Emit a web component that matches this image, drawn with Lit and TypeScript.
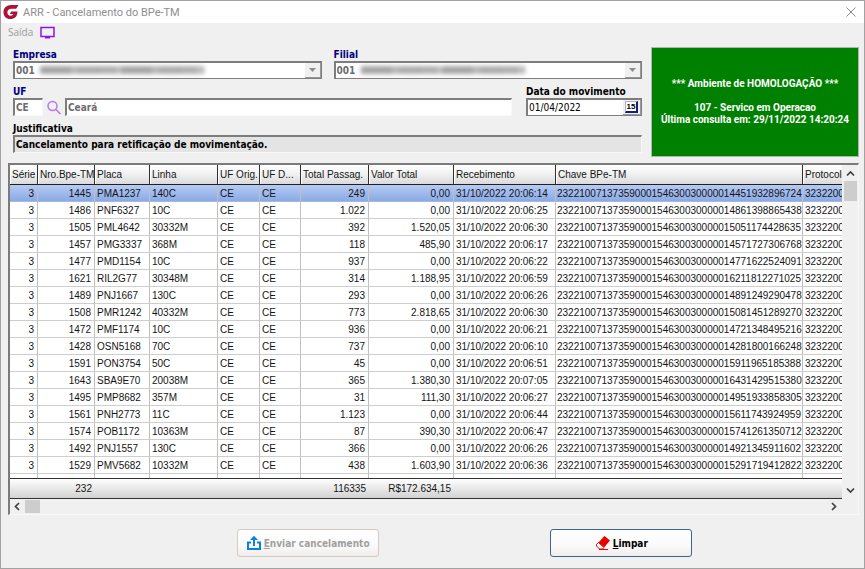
import { LitElement, html, css, svg } from "lit";
import { customElement } from "lit/decorators.js";
import { classMap } from "lit/directives/class-map.js";

const COLUMNS = [
  { key: "serie", label: "Série", num: true },
  { key: "numero", label: "Nro.Bpe-TM", num: true },
  { key: "placa", label: "Placa" },
  { key: "linha", label: "Linha" },
  { key: "origem", label: "UF Orig." },
  { key: "destino", label: "UF D..." },
  { key: "passagens", label: "Total Passag.", num: true },
  { key: "valor", label: "Valor Total", num: true },
  { key: "recebimento", label: "Recebimento" },
  { key: "chave", label: "Chave BPe-TM" },
  { key: "protocolo", label: "Protocolo" },
];

const KEY_PREFIX = "232210071373590001546300300000";

const ROWS: string[][] = [
  ["1445", "PMA1237", "140C", "249", "0,00", "20:06:14", "14451932896724"],
  ["1486", "PNF6327", "10C", "1.022", "0,00", "20:06:25", "14861398865438"],
  ["1505", "PML4642", "30332M", "392", "1.520,05", "20:06:30", "15051174428635"],
  ["1457", "PMG3337", "368M", "118", "485,90", "20:06:17", "14571727306768"],
  ["1477", "PMD1154", "10C", "937", "0,00", "20:06:22", "14771622524091"],
  ["1621", "RIL2G77", "30348M", "314", "1.188,95", "20:06:59", "16211812271025"],
  ["1489", "PNJ1667", "130C", "293", "0,00", "20:06:26", "14891249290478"],
  ["1508", "PMR1242", "40332M", "773", "2.818,65", "20:06:30", "15081451289270"],
  ["1472", "PMF1174", "10C", "936", "0,00", "20:06:21", "14721348495216"],
  ["1428", "OSN5168", "70C", "737", "0,00", "20:06:10", "14281800166248"],
  ["1591", "PON3754", "50C", "45", "0,00", "20:06:51", "15911965185388"],
  ["1643", "SBA9E70", "20038M", "365", "1.380,30", "20:07:05", "16431429515380"],
  ["1495", "PMP8682", "357M", "31", "111,30", "20:06:27", "14951933858305"],
  ["1561", "PNH2773", "11C", "1.123", "0,00", "20:06:44", "15611743924959"],
  ["1574", "POB1172", "10363M", "87", "390,30", "20:06:47", "15741261350712"],
  ["1492", "PNJ1557", "130C", "366", "0,00", "20:06:26", "14921345911602"],
  ["1529", "PMV5682", "10332M", "438", "1.603,90", "20:06:36", "15291719412822"],
].map(([numero, placa, linha, passagens, valor, hora, chave]) => [
  "3", numero, placa, linha, "CE", "CE", passagens, valor,
  `31/10/2022 ${hora}`, KEY_PREFIX + chave, "3232200",
]);

const TOTALS = ["", "232", "", "", "", "", "116335", "R$172.634,15", "", "", ""];

const chevron = (d: string) => html`
  <svg width="9" height="9" viewBox="0 0 9 9" fill="none" stroke="#404040" stroke-width="1.7">
    ${svg`<path d=${d} />`}
  </svg>`;

@customElement("bpe-grid")
export class BpeGrid extends LitElement {
  static styles = css`
    :host {
      display: grid;
      grid-template-columns: minmax(0, 1fr) 16px;
      border: 1px solid #f8f8f8;
      border-top: 2px solid #7b7b7b;
      border-left: 2px solid #7b7b7b;
      background: #f0f0f0;
      font: 10px "Liberation Sans", sans-serif;
      color: #141414;
    }
    .view { overflow: hidden; background: #fff; }
    table { width: 100%; table-layout: fixed; border-collapse: separate; border-spacing: 0; }
    .serie { width: 28px; }
    .numero { width: 57px; }
    .placa { width: 55px; }
    .linha { width: 68px; }
    .origem { width: 42px; }
    .destino { width: 41px; }
    .passagens { width: 68px; }
    .valor { width: 85px; }
    .recebimento { width: 102px; }
    .chave { width: 247px; }
    th, td {
      box-sizing: border-box;
      padding: 0 3px 0 2px;
      overflow: hidden;
      white-space: nowrap;
      text-align: left;
      font-weight: normal;
    }
    th {
      height: 20px;
      background: linear-gradient(#fff, #f0f0f0 50%, #dadada);
      border-right: 1px solid #303030;
      border-bottom: 1px solid #202020;
      box-shadow: inset 1px 1px #fff;
    }
    td {
      height: 17px;
      border-right: 1px solid #c0c0c0;
      border-bottom: 1px solid #cecece;
    }
    td.fit { padding: 0 0 0 1px; }
    th:last-child, td:last-child { border-right: 0; padding-right: 0; }
    td.num { text-align: right; }
    .selected td {
      background: linear-gradient(#b6cbf3, #8aa9e6);
      border-bottom-color: #a6b8dc;
    }
    .filler td { height: 4px; padding: 0; border-bottom: 0; }
    tfoot td {
      height: 21px;
      border-right: 0;
      border-top: 1px solid #303030;
      border-bottom: 1px solid #303030;
      background: linear-gradient(#fff, #e8e8e8 50%, #d2d2d2);
    }
    .vbar, .hbar { display: flex; align-items: center; justify-content: space-between; }
    .vbar { flex-direction: column; padding: 4px 0; }
    .hbar { height: 15px; padding: 0 4px 0 3px; }
    .group { display: flex; align-items: center; gap: 3px; }
    .vbar .group { flex-direction: column; }
    .thumb { background: #cdcdcd; width: 15px; height: 13px; }
    .vbar .thumb { width: 13px; height: 20px; }
    svg { display: block; }
  `;

  render() {
    return html`
      <div class="view">
        <table>
          <thead>
            <tr>${COLUMNS.map((c) => html`<th scope="col" class=${c.key}>${c.label}</th>`)}</tr>
          </thead>
          <tbody>
            ${ROWS.map((row, i) => html`
              <tr class=${classMap({ selected: i === 0 })}>
                ${row.map((v, c) => html`<td class=${classMap({ num: !!COLUMNS[c].num, fit: COLUMNS[c].key === "chave" })}>${v}</td>`)}
              </tr>`)}
            <tr class="filler">${COLUMNS.map(() => html`<td></td>`)}</tr>
          </tbody>
          <tfoot>
            <tr>${TOTALS.map((v) => html`<td class="num">${v}</td>`)}</tr>
          </tfoot>
        </table>
      </div>
      <div class="vbar">
        <div class="group">${chevron("M1 6.5 4.5 3 8 6.5")}<div class="thumb"></div></div>
        ${chevron("M1 2.5 4.5 6 8 2.5")}
      </div>
      <div class="hbar">
        <div class="group">${chevron("M6 1 2.5 4.5 6 8")}<div class="thumb"></div></div>
        ${chevron("M3 1 6.5 4.5 3 8")}
      </div>
      <div></div>
    `;
  }
}

@customElement("app-root")
export class AppRoot extends LitElement {
  static styles = css`
    :host {
      display: block;
      box-sizing: border-box;
      min-height: 100vh;
      border: 1px solid #a2a2a2;
      background: #f0f0f0;
      font: 10px "DejaVu Sans Condensed", "DejaVu Sans", sans-serif;
      color: #000;
    }
    svg { display: block; flex: none; }
    button { font: inherit; color: inherit; padding: 0; cursor: default; }
    .titlebar {
      display: flex;
      align-items: center;
      gap: 4px;
      height: 22px;
      padding: 0 8px 0 2px;
      background: #fff;
      color: #8e8e8e;
      font: 11px Roboto, "Noto Sans", sans-serif;
    }
    .title { flex: 1; margin: 0; font: inherit; }
    .plain { border: 0; background: none; }
    .menu {
      display: flex;
      align-items: center;
      gap: 7px;
      height: 18px;
      padding: 0 7px;
      color: #9a9a9a;
      font: 10px "Open Sans", "Noto Sans", sans-serif;
    }
    .top { display: flex; gap: 9px; padding: 6px 5px 0 12px; }
    .fields { flex: 1; min-width: 0; display: flex; flex-direction: column; gap: 5px; }
    .line { display: flex; gap: 12px; }
    .field { flex: 1; min-width: 0; }
    .date { flex: none; width: 116px; }
    label { display: block; height: 14px; line-height: 15px; font-weight: bold; }
    .navy { color: #000080; }
    .box {
      display: flex;
      box-sizing: border-box;
      width: 100%;
      height: 18px;
      background: #fff;
      border: 1px solid #f8f8f8;
      border-top: 2px solid #7d7d7d;
      border-left: 2px solid #7d7d7d;
      position: relative;
    }
    .box.combo, .box.cal { border-right-color: #7d7d7d; border-bottom-color: #7d7d7d; }
    .box.gray { background: #e4e4e4; }
    input, select {
      appearance: none;
      flex: 1;
      min-width: 0;
      width: 100%;
      height: 100%;
      margin: 0;
      padding: 0 1px;
      border: 0;
      border-radius: 0;
      background: none;
      font: inherit;
      color: #000;
      opacity: 1;
    }
    .bold input, .bold select { font-weight: bold; }
    .bold input:disabled, .bold select:disabled { color: #6d6d6d; }
    .arrow {
      display: flex;
      flex: none;
      align-items: center;
      justify-content: center;
      box-sizing: border-box;
      width: 16px;
      background: #f0f0f0;
      border: 0 solid #9a9a9a;
      border-width: 0 1px 1px 0;
    }
    .arrow.wide { width: 18px; }
    .day {
      box-sizing: border-box;
      width: 13px;
      height: 12px;
      background: #fff;
      border: 1px solid #b0b0c8;
      border-right: 2px solid #1c1c80;
      border-bottom: 2px solid #1c1c80;
      font: bold 8px/9px "Liberation Sans", sans-serif;
    }
    .redacted {
      position: absolute;
      left: 25px;
      top: 3px;
      width: 164px;
      height: 8px;
      filter: blur(2px);
      background: repeating-linear-gradient(90deg, #a4a4a4 0 31px, #b8b8b8 31px 38px, #acacac 38px 61px, #b0b0b0 61px 77px, #c4c4c4 77px 81px);
    }
    .uf { display: flex; align-items: center; gap: 4px; padding-right: 2px; }
    .code { flex: none; width: 30px; }
    .status {
      display: flex;
      flex-direction: column;
      align-items: center;
      justify-content: center;
      box-sizing: border-box;
      width: 208px;
      height: 110px;
      background: #008000;
      border: 1px solid #fff;
      outline: 1px solid #b4b4b4;
      outline-offset: -1px;
      color: #fff;
      font: bold 10px/12px Roboto, "Noto Sans", sans-serif;
      white-space: nowrap;
    }
    .status p { margin: 0; }
    .status p:first-child { margin-bottom: 12px; }
    bpe-grid { margin: 6px 5px 0 7px; }
    .actions { display: flex; justify-content: space-evenly; padding: 14px 0 11px 64px; }
    .action {
      display: flex;
      align-items: center;
      justify-content: center;
      gap: 2px;
      width: 142px;
      height: 28px;
      border: 1px solid #3a6591;
      border-radius: 3px;
      background: linear-gradient(#fff, #fbfafa 60%, #f0eceb);
      font-weight: bold;
    }
    .action:disabled { border-color: #d4ccc4; color: #a0a0a0; }
  `;

  private combo(id: string, label: string) {
    return html`
      <div class="field">
        <label class="navy" for=${id}>${label}</label>
        <div class="box combo bold">
          <select id=${id} disabled><option>001</option></select>
          <span class="redacted"></span>
          <span class="arrow">
            <svg width="7" height="4" viewBox="0 0 7 4"><path d="M0 0h7L3.500 4z" fill="#8c8c8c" /></svg>
          </span>
        </div>
      </div>`;
  }

  render() {
    return html`
      <header class="titlebar">
        <svg width="16" height="16" viewBox="0 0 16 16">
          <path d="M15.500 1H8.200C3.500 1 .5 4 .5 8.200c0 4 2.800 6.800 6.800 6.800 4.300 0 7-2.200 7.200-7.500H8.300L6.800 10h3.500c-.6 1.200-1.500 1.700-2.800 1.700-2 0-3.100-1.400-3.100-3.400C4.400 6 6 4.700 8.500 4.700h4.700z" fill="#ad1237" />
        </svg>
        <h1 class="title">ARR - Cancelamento do BPe-TM</h1>
        <button class="plain" aria-label="Fechar">
          <svg width="10" height="10" viewBox="0 0 10 10"><path d="M.5.5l9 9M9.500.5l-9 9" stroke="#8a8a8a" /></svg>
        </button>
      </header>
      <nav class="menu">
        <button class="plain">Saída</button>
        <svg width="15" height="13" viewBox="0 0 15 13">
          <path d="M1 1.500h13v9H1z" fill="none" stroke="#8a14e6" stroke-width="1.500" />
          <path d="M5 10h5v2.500H5z" fill="#8a14e6" />
        </svg>
      </nav>
      <section class="top">
        <div class="fields">
          <div class="line">${this.combo("empresa", "Empresa")}${this.combo("filial", "Filial")}</div>
          <div class="line">
            <div class="field bold">
              <label class="navy" for="uf">UF</label>
              <div class="uf">
                <div class="box code"><input id="uf" value="CE" disabled /></div>
                <button class="plain" aria-label="Pesquisar UF">
                  <svg width="14" height="16" viewBox="0 0 14 16" fill="none" stroke="#b877ea" stroke-width="1.500">
                    <circle cx="5.500" cy="7" r="4.500" /><path d="M9 10.500l4.500 4.500" />
                  </svg>
                </button>
                <div class="box"><input aria-label="Nome da UF" value="Ceará" disabled /></div>
              </div>
            </div>
            <div class="date">
              <label for="data">Data do movimento</label>
              <div class="box cal">
                <input id="data" value="01/04/2022" />
                <button class="arrow wide" aria-label="Calendário"><span class="day">15</span></button>
              </div>
            </div>
          </div>
          <div class="field bold">
            <label for="just">Justificativa</label>
            <div class="box gray"><input id="just" value="Cancelamento para retificação de movimentação." /></div>
          </div>
        </div>
        <div class="status">
          <p>*** Ambiente de HOMOLOGAÇÃO ***</p>
          <p>107 - Servico em Operacao</p>
          <p>Última consulta em: 29/11/2022 14:20:24</p>
        </div>
      </section>
      <bpe-grid></bpe-grid>
      <footer class="actions">
        <button class="action" disabled>
          <svg width="16" height="16" viewBox="0 0 16 16" fill="none" stroke="#0a80e0" stroke-width="2">
            <path d="M5 7.500H2V14h12V7.500H11M8 11V4" /><path d="M4 5 8 .8 12 5z" fill="#0a80e0" stroke="none" />
          </svg>
          <span><u>E</u>nviar cancelamento</span>
        </button>
        <button class="action">
          <svg width="16" height="16" viewBox="0 0 16 16">
            <path d="M9.500 1 15 5.500 9 12.500 3.500 7.500z" fill="#e60000" />
            <path d="M3.500 7.500 9 12.500 7.500 14H4.500L1.500 11V9.500z" fill="#fff" stroke="#e60000" />
            <path d="M4 14.500h9" stroke="#e60000" />
          </svg>
          <span><u>L</u>impar</span>
        </button>
      </footer>
    `;
  }
}
